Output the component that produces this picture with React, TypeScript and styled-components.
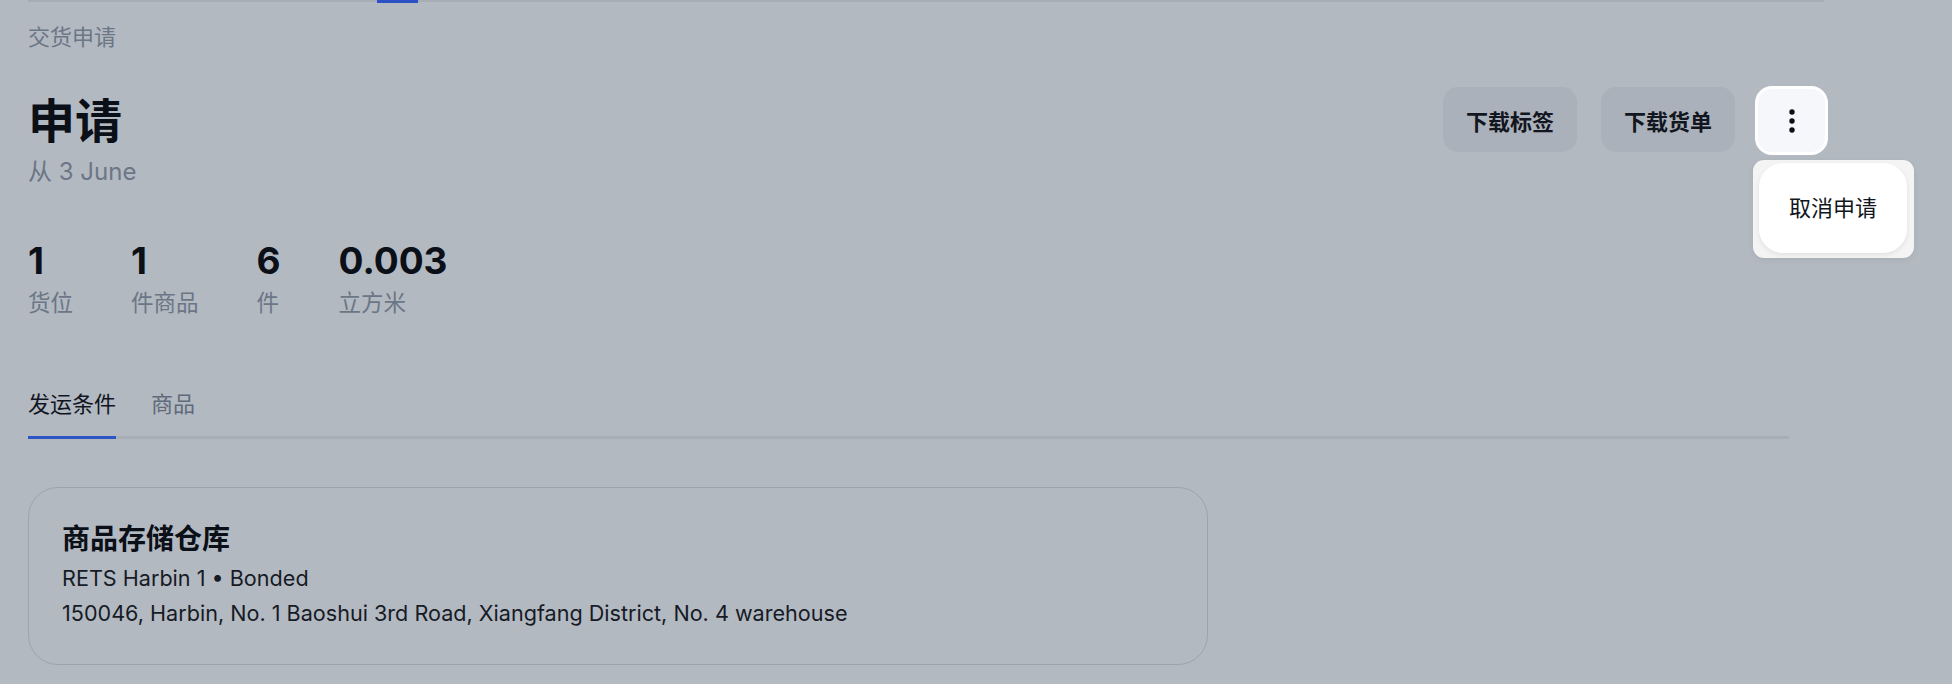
import React from "react";
import styled, { createGlobalStyle } from "styled-components";

const Global = createGlobalStyle`
  html, body { margin: 0; padding: 0; background: #b3b9c1; }
  body {
    font-family: Inter, "Noto Sans CJK SC", sans-serif;
    color: #0c1018;
    width: 1952px;
    height: 684px;
    overflow: hidden;
  }
  * { box-sizing: border-box; }
`;

const Page = styled.div`
  width: 1952px;
  height: 684px;
  padding-left: 28px;
  display: flex;
  flex-direction: column;
`;

const TopStrip = styled.div`
  width: 1796px;
  height: 2px;
  background: #a6adb7;
  display: flex;
`;

const TopActive = styled.div`
  margin-left: 349px;
  width: 41px;
  height: 3px;
  background: #2c50c6;
`;

const Breadcrumb = styled.div`
  margin-top: 20px;
  font-size: 22px;
  line-height: 30px;
  color: #6b7686;
`;

const Header = styled.div`
  margin-top: 35px;
  width: 1800px;
  display: flex;
  justify-content: space-between;
  align-items: flex-start;
`;

const TitleBlock = styled.div`
  padding-top: 6px;
  display: flex;
  flex-direction: column;
`;

const Title = styled.h1`
  margin: 0;
  font-size: 47px;
  line-height: 56px;
  font-weight: 700;
  color: #0b0f17;
`;

const Subtitle = styled.div`
  margin-top: 7px;
  font-size: 24px;
  line-height: 32px;
  color: #6b7686;
`;

const Actions = styled.div`
  display: flex;
  align-items: flex-start;
  gap: 24px;
`;

const ActionButton = styled.button`
  height: 65px;
  padding: 0 23px;
  border: none;
  border-radius: 15px;
  background: #abb1ba;
  font-family: Inter, "Noto Sans CJK SC", sans-serif;
  font-size: 22px;
  font-weight: 700;
  color: #111620;
  cursor: pointer;
`;

const MenuAnchor = styled.div`
  position: relative;
  margin-left: -4px;
  margin-top: -1px;
`;

const KebabButton = styled.button`
  width: 73px;
  height: 69px;
  border: 3px solid #ffffff;
  border-radius: 17px;
  background: #f5f7fb;
  display: flex;
  align-items: center;
  justify-content: center;
  padding: 0;
  cursor: pointer;
`;

const Menu = styled.div`
  position: absolute;
  top: 74px;
  left: -2px;
  width: 161px;
  height: 98px;
  padding: 3px 7px 5px 6px;
  background: #f4f4f5;
  border-radius: 11px;
  box-shadow: 0 2px 6px rgba(0, 0, 0, 0.06);
`;

const MenuItem = styled.div`
  width: 100%;
  height: 100%;
  border-radius: 24px;
  background: #ffffff;
  box-shadow: 0 2px 5px rgba(0, 0, 0, 0.08);
  display: flex;
  align-items: center;
  justify-content: center;
  padding-bottom: 4px;
  font-size: 22px;
  color: #111620;
`;

const Stats = styled.div`
  margin-top: 51px;
  display: flex;
  gap: 58px;
`;

const Stat = styled.div`
  display: flex;
  flex-direction: column;
  gap: 5px;
`;

const StatValue = styled.div`
  font-size: 37px;
  line-height: 44px;
  font-weight: 700;
  color: #0b0f17;
`;

const StatLabel = styled.div`
  font-size: 22.5px;
  line-height: 30px;
  color: #6b7686;
`;

const Tabs = styled.div`
  margin-top: 71px;
  width: 1761px;
  display: flex;
  gap: 35px;
  border-bottom: 3px solid #a8aeb8;
`;

const Tab = styled.div<{ $active?: boolean }>`
  font-size: 22px;
  line-height: 30px;
  padding-bottom: 17px;
  margin-bottom: -3px;
  border-bottom: 3px solid ${(p) => (p.$active ? "#2f54c4" : "transparent")};
  color: ${(p) => (p.$active ? "#10151f" : "#5f6a7a")};
`;

const Card = styled.div`
  margin-top: 48px;
  width: 1180px;
  height: 178px;
  border: 1px solid #9da4af;
  border-radius: 30px;
  padding: 33px 33px 32px 33px;
  display: flex;
  flex-direction: column;
`;

const CardTitle = styled.div`
  font-size: 28px;
  line-height: 36px;
  font-weight: 700;
  color: #0b0f17;
  margin-bottom: 4px;
`;

const CardLine = styled.div`
  font-size: 21.6px;
  line-height: 35px;
  color: #161b25;
`;

const DotsIcon = () => (
  <svg width="8" height="26" viewBox="0 0 8 26">
    <circle cx="4" cy="4" r="2.7" fill="#0b0f17" />
    <circle cx="4" cy="13" r="2.7" fill="#0b0f17" />
    <circle cx="4" cy="22" r="2.7" fill="#0b0f17" />
  </svg>
);

const stats = [
  { value: "1", label: "货位" },
  { value: "1", label: "件商品" },
  { value: "6", label: "件" },
  { value: "0.003", label: "立方米" },
];

export default function App() {
  return (
    <>
      <Global />
      <Page>
        <TopStrip>
          <TopActive />
        </TopStrip>
        <Breadcrumb>交货申请</Breadcrumb>
        <Header>
          <TitleBlock>
            <Title>申请</Title>
            <Subtitle>从 3 June</Subtitle>
          </TitleBlock>
          <Actions>
            <ActionButton>下载标签</ActionButton>
            <ActionButton>下载货单</ActionButton>
            <MenuAnchor>
              <KebabButton aria-label="更多">
                <DotsIcon />
              </KebabButton>
              <Menu>
                <MenuItem>取消申请</MenuItem>
              </Menu>
            </MenuAnchor>
          </Actions>
        </Header>
        <Stats>
          {stats.map((s, i) => (
            <Stat key={i}>
              <StatValue>{s.value}</StatValue>
              <StatLabel>{s.label}</StatLabel>
            </Stat>
          ))}
        </Stats>
        <Tabs>
          <Tab $active>发运条件</Tab>
          <Tab>商品</Tab>
        </Tabs>
        <Card>
          <CardTitle>商品存储仓库</CardTitle>
          <CardLine>RETS Harbin 1 • Bonded</CardLine>
          <CardLine>150046, Harbin, No. 1 Baoshui 3rd Road, Xiangfang District, No. 4 warehouse</CardLine>
        </Card>
      </Page>
    </>
  );
}
